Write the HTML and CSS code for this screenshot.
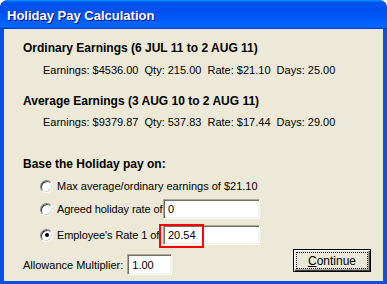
FILE: index.html
```html
<!DOCTYPE html>
<html lang="en">
<head>
    <meta charset="UTF-8">
    <meta name="viewport" content="width=device-width, initial-scale=1.0">
    <title>Holiday Pay Calculation</title>
    <link rel="stylesheet" href="styles.css">
</head>
<body>
    <div class="window">
        <div class="titlebar">
            <span class="title">Holiday Pay Calculation</span>
        </div>
        <div class="client">
            <div class="period">
                <h2 class="heading">Ordinary Earnings (6 JUL 11 to 2 AUG 11)</h2>
                <p class="stats">Earnings: $4536.00  Qty: 215.00  Rate: $21.10  Days: 25.00</p>
            </div>
            <div class="period second">
                <h2 class="heading">Average Earnings (3 AUG 10 to 2 AUG 11)</h2>
                <p class="stats">Earnings: $9379.87  Qty: 537.83  Rate: $17.44  Days: 29.00</p>
            </div>
            <div class="basis">
                <h2 class="heading">Base the Holiday pay on:</h2>
                <div class="option first">
                    <span class="radio"></span>
                    <span class="label">Max average/ordinary earnings of $21.10</span>
                </div>
                <div class="option second">
                    <span class="radio"></span>
                    <span class="label fixed">Agreed holiday rate of</span>
                    <input class="field wide" type="text" value="0" readonly>
                </div>
                <div class="option third">
                    <span class="radio checked"></span>
                    <span class="label fixed">Employee's Rate 1 of</span>
                    <span class="marked">
                        <input class="field wide" type="text" value="20.54" readonly>
                        <span class="marker"></span>
                    </span>
                </div>
            </div>
            <div class="footer">
                <div class="multiplier">
                    <span class="label">Allowance Multiplier:</span>
                    <input class="field small" type="text" value="1.00" readonly>
                </div>
                <button class="button default"><span class="focus"><u>C</u>ontinue</span></button>
            </div>
        </div>
    </div>
</body>
</html>
```

FILE: styles.css
```css
body {
    margin: 0;
    font-family: 'Liberation Sans', Arial, sans-serif;
    font-size: 11px;
    color: #000;
    background-color: #ffffff;
}
.window {
    width: 387px;
    height: 284px;
    display: flex;
    flex-direction: column;
    background-color: #0b4fe2;
    border-radius: 8px 8px 0 0;
    overflow: hidden;
}
.titlebar {
    height: 29px;
    flex: none;
    display: flex;
    align-items: center;
    padding-left: 7px;
    background: linear-gradient(180deg, #0997ff, #0053ee 8%, #0050ee 40%, #0066ff 88%, #0066ff 93%, #005bff 95%, #003dd7 96%, #003dd7);
}
.title {
    color: #ffffff;
    font-weight: bold;
    font-size: 13px;
    text-shadow: 1px 1px 0 #0f1089;
    margin-top: 1px;
}
.client {
    flex: 1;
    margin: 0 4px 3px 4px;
    background-color: #ece9d8;
    padding-top: 12px;
}
.heading {
    margin: 0;
    padding-left: 19px;
    font-size: 12px;
    font-weight: bold;
    line-height: 14px;
}
.stats {
    margin: 8px 0 0;
    padding-left: 39px;
    line-height: 14px;
    white-space: pre;
}
.period.second { margin-top: 17px; }
.period.second .stats { margin-top: 7px; }
.basis { margin-top: 28px; }
.option {
    display: flex;
    align-items: center;
    height: 20px;
    padding-left: 36px;
}
.option.first { margin-top: 5px; }
.option.second { margin-top: 3px; }
.option.third { margin-top: 6px; }
.radio {
    flex: none;
    width: 11px;
    height: 11px;
    border-radius: 50%;
    border: 1px solid;
    border-color: #808080 #ffffff #ffffff #808080;
    background-color: #ffffff;
    box-shadow: inset 1px 1px 0 #404040, inset -1px -1px 0 #d4d0c8;
    display: flex;
    justify-content: center;
    align-items: center;
    margin-right: 4px;
}
.radio.checked::after {
    content: '';
    width: 4px;
    height: 4px;
    border-radius: 50%;
    background-color: #000;
}
.label { white-space: nowrap; }
.label.fixed {
    flex: none;
    width: 106px;
    letter-spacing: -0.1px;
}
.field {
    box-sizing: border-box;
    height: 20px;
    margin: 0;
    padding: 0 0 0 4px;
    border: 1px solid;
    border-color: #aca899 #ffffff #ffffff #aca899;
    box-shadow: inset 1px 1px 0 #716f64, inset -1px -1px 0 #f1efe2;
    background-color: #ffffff;
    font-family: 'Liberation Sans', Arial, sans-serif;
    font-size: 11px;
    color: #000;
    outline: none;
}
.field.wide { width: 97px; }
.field.small { width: 45px; height: 21px; }
.marked {
    position: relative;
    display: flex;
}
.marker {
    position: absolute;
    left: -4px;
    top: -1px;
    width: 41px;
    height: 20px;
    border: 2px solid #ff0000;
}
.footer {
    display: flex;
    justify-content: space-between;
    align-items: flex-start;
    margin-top: 4px;
    padding: 0 12px 0 19px;
}
.multiplier {
    display: flex;
    align-items: center;
    gap: 4px;
    margin-top: 5px;
}
.button {
    width: 78px;
    height: 23px;
    padding: 2px;
    border: 1px solid #000;
    background-color: #ece9d8;
    box-shadow: inset 1px 1px 0 #ffffff, inset -1px -1px 0 #404040, inset -2px -2px 0 #aca899;
    font-family: 'Liberation Sans', Arial, sans-serif;
    font-size: 12px;
    color: #000;
    display: flex;
}
.focus {
    flex: 1;
    border: 1px dotted #000;
    display: flex;
    justify-content: center;
    align-items: center;
}
```
